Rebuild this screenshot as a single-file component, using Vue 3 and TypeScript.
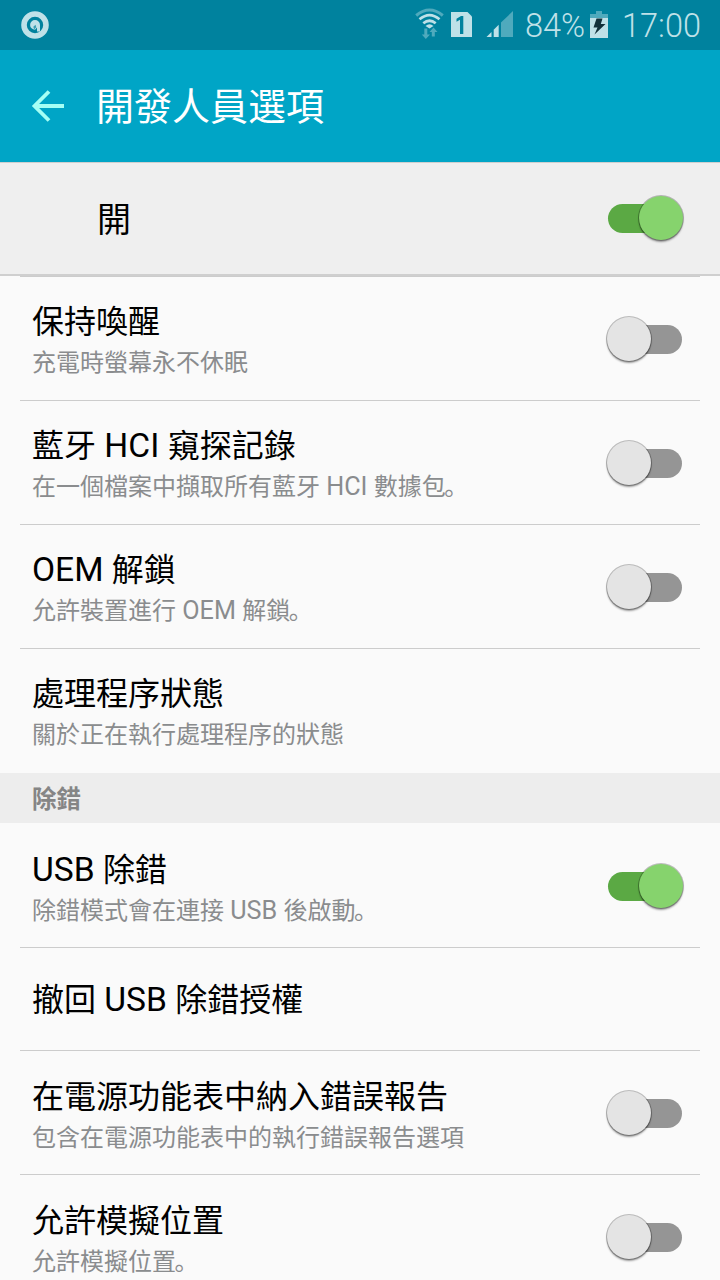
<script setup lang="ts">
interface Setting {
  title: string
  summary?: string
  on?: boolean
}

interface Run {
  text: string
  kind: 'latin' | 'stop' | 'han'
}

const general: Setting[] = [
  { title: '保持喚醒', summary: '充電時螢幕永不休眠', on: false },
  { title: '藍牙 HCI 窺探記錄', summary: '在一個檔案中擷取所有藍牙 HCI 數據包。', on: false },
  { title: 'OEM 解鎖', summary: '允許裝置進行 OEM 解鎖。', on: false },
  { title: '處理程序狀態', summary: '關於正在執行處理程序的狀態' },
]

const debugging: Setting[] = [
  { title: 'USB 除錯', summary: '除錯模式會在連接 USB 後啟動。', on: true },
  { title: '撤回 USB 除錯授權' },
  { title: '在電源功能表中納入錯誤報告', summary: '包含在電源功能表中的執行錯誤報告選項', on: false },
  { title: '允許模擬位置', summary: '允許模擬位置。', on: false },
]

const groups = [
  { heading: '', items: general },
  { heading: '除錯', items: debugging },
]

// Latin words are set slightly larger than the ideographs around them,
// and full stops sit tight against the preceding character.
function runs(text: string): Run[] {
  return text
    .split(/([A-Za-z ]+|。)/)
    .filter((part) => part.length > 0)
    .map((part) => ({
      text: part,
      kind: part === '。' ? 'stop' : /[A-Za-z ]/.test(part) ? 'latin' : 'han',
    }))
}
</script>

<template>
  <div class="screen">
    <header class="status">
      <svg class="app-badge" viewBox="0 0 28 28" width="28" height="28">
        <circle cx="14" cy="14" r="11" fill="none" stroke="#bfe1e8" stroke-width="5.6" />
        <path d="M14 9A5 5 0 0 1 19 14V20.500H16V16.500L14 18.800A4.900 4.900 0 0 1 14 9Z" fill="#bfe1e8" />
        <path d="M12.300 15.700L14.600 13.800L15.200 16.300L13.200 18.600Z" fill="#3b9eb2" />
      </svg>
      <svg class="indicators" viewBox="0 0 106 40" width="106" height="40">
        <g fill="none" stroke-width="2.7">
          <path d="M1.200 10.500Q14.500-0.500 27.800 10.500" stroke="#4faabd" stroke-width="3" />
          <path d="M4.500 14.300Q14.500 6 24.500 14.300" stroke="#bfe1e8" />
          <path d="M8.300 18.300Q14.500 13.200 20.700 18.300" stroke="#bfe1e8" />
        </g>
        <path d="M10.500 21Q14.500 17.500 18.500 21L14.500 23.500Z" fill="#bfe1e8" />
        <path d="M9.300 23.500H12.300V29.500H15L10.800 34L6.800 29.500H9.300ZM16.800 31.500V27H14.500L18.500 22.500L22.500 27H19.800V31.500Z" fill="#4faabd" />
        <path d="M36 7H52.500L57 11.500V32H36Z" fill="#bfe1e8" />
        <path d="M41.500 13.800L46 11H48.300V29H45V14.700L41.500 16.800Z" fill="#00829e" />
        <path d="M71.500 32L76.500 27V32Z" fill="#bfe1e8" />
        <path d="M78.700 24.700L83.700 19.700V32H78.700Z" fill="#bfe1e8" />
        <path d="M86 17.500L98 6V32H86Z" fill="#4faabd" />
      </svg>
      <span class="percent">84%</span>
      <svg class="battery" viewBox="0 0 20 30" width="20" height="30">
        <path d="M7 1H13V4H19V9H1V4H7Z" fill="#4faabd" />
        <path d="M1 8H19V28H1Z" fill="#bfe1e8" />
        <path d="M7.500 8.500H13.500L11.800 14H16.500L5.500 24.500L8.500 17.500H4.500Z" fill="#12313b" />
      </svg>
      <span class="clock">17:00</span>
    </header>

    <div class="appbar">
      <svg class="back" viewBox="0 0 34 34" width="34" height="34">
        <path d="M18 2.500L3.500 17L18 31.500M3.500 17H33" fill="none" stroke="#a5fff5" stroke-width="3.8" />
      </svg>
      <h1>開發人員選項</h1>
    </div>

    <div class="master">
      <span>開</span>
      <span class="toggle on"><i class="track" /><i class="thumb" /></span>
    </div>

    <main>
      <section v-for="group in groups" :key="group.heading">
        <h2 v-if="group.heading">{{ group.heading }}</h2>
        <ul>
          <li v-for="item in group.items" :key="item.title" :class="{ single: !item.summary }">
            <div class="label">
              <p class="title">
                <span v-for="(run, i) in runs(item.title)" :key="i" :class="run.kind">{{ run.text }}</span>
              </p>
              <p v-if="item.summary" class="summary">
                <span v-for="(run, i) in runs(item.summary)" :key="i" :class="run.kind">{{ run.text }}</span>
              </p>
            </div>
            <span v-if="item.on !== undefined" class="toggle" :class="{ on: item.on }">
              <i class="track" /><i class="thumb" />
            </span>
          </li>
        </ul>
      </section>
    </main>
  </div>
</template>

<style>
body {
  margin: 0;
  overflow: hidden;
}
</style>

<style scoped>
.screen {
  width: 720px;
  height: 1280px;
  overflow: hidden;
  display: flex;
  flex-direction: column;
  background: #fafafa;
  color: #000;
  font-family: 'Noto Sans CJK SC', sans-serif;
}

h1, h2, p, ul {
  margin: 0;
  padding: 0;
  font-weight: 400;
}

.status {
  flex: none;
  box-sizing: border-box;
  height: 50px;
  padding: 0 19px 0 21px;
  display: flex;
  align-items: center;
  background: #00829e;
  color: #bfe1e8;
  font: 300 32.500px/52px Roboto, sans-serif;
  white-space: nowrap;
}

.status span {
  padding-top: 2px;
}

.indicators {
  margin-left: auto;
  margin-top: -1px;
}

.percent {
  width: 58px;
  margin-left: 4px;
}

.battery {
  margin-left: 6px;
  margin-top: -1px;
}

.clock {
  margin-left: 13px;
}

.appbar {
  flex: none;
  height: 112px;
  padding-left: 31px;
  display: flex;
  align-items: center;
  background: #00a5c6;
}

.appbar h1 {
  margin-left: 31px;
  padding-bottom: 4px;
  color: #fff;
  font-size: 38px;
  line-height: 56px;
}

.master {
  flex: none;
  box-sizing: border-box;
  height: 114px;
  padding: 0 36px 2px 97px;
  display: flex;
  align-items: center;
  justify-content: space-between;
  background: #efefef;
  border-top: 1px solid #cfcfcf;
  border-bottom: 2px solid #cfcfcf;
  font-size: 34px;
}

ul {
  list-style: none;
}

li {
  box-sizing: border-box;
  height: 124px;
  margin: 0 20px;
  padding: 0 16px 0 12px;
  display: flex;
  align-items: center;
  justify-content: space-between;
  border-top: 1px solid #cccccc;
}

li.single {
  height: 103px;
}

h2 + ul li:first-child {
  border-top-color: transparent;
}

h2 {
  height: 50px;
  margin-top: 1px;
  padding-left: 32px;
  background: #ededed;
  color: #858585;
  font-size: 24.500px;
  font-weight: 700;
  line-height: 50px;
}

.label {
  padding-bottom: 2px;
}

h2 + ul .label {
  padding-bottom: 0;
}

h2 + ul .single .label {
  padding-bottom: 4px;
}

.title {
  font-size: 32px;
  line-height: 45px;
  white-space: pre;
}

.title .latin {
  font-family: Roboto, sans-serif;
  font-size: 33.600px;
  line-height: 1;
}

.summary {
  color: #8a8c8e;
  font-size: 24px;
  line-height: 37px;
  white-space: pre;
}

.summary .latin {
  font-family: Roboto, sans-serif;
  font-size: 25.200px;
  line-height: 1;
}

.summary .stop {
  margin-left: -1.500px;
}

.toggle {
  position: relative;
  flex: none;
  width: 80px;
  height: 50px;
}

.track {
  position: absolute;
  left: 30px;
  top: 11px;
  width: 48px;
  height: 29px;
  border-radius: 0 15px 15px 0;
  background: #959595;
}

.thumb {
  position: absolute;
  left: 3px;
  top: 3px;
  width: 44px;
  height: 44px;
  border-radius: 50%;
  background: #e4e4e4;
  box-shadow: 0 0 0 1px rgba(0, 0, 0, 0.25), 0 2px 2px rgba(0, 0, 0, 0.4);
}

.on .track {
  left: 4px;
  border-radius: 15px 0 0 15px;
  background: #5ba944;
}

.on .thumb {
  left: 35px;
  background: #86d36d;
}
</style>
